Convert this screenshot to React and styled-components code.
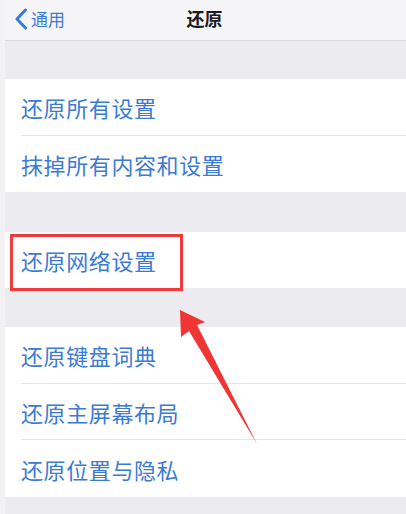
import React from 'react'
import styled, { createGlobalStyle } from 'styled-components'

const Global = createGlobalStyle`
  html, body {
    margin: 0;
    padding: 0;
    background: #ececf0;
  }
  body {
    font-family: "Noto Sans CJK SC", "Noto Sans", sans-serif;
  }
`

const Page = styled.div`
  position: relative;
  width: 406px;
  height: 514px;
  overflow: hidden;
  box-sizing: border-box;
  border-left: 5px solid #f2f2f5;
  background: #ececf0;
`

const NavBar = styled.div`
  height: 40px;
  box-sizing: content-box;
  background: #f5f5f8;
  border-bottom: 1px solid #d9d9de;
  display: grid;
  grid-template-columns: 1fr auto 1fr;
  align-items: center;
  margin-left: -5px;
  padding-left: 5px;
  padding-bottom: 0;
`

const Back = styled.div`
  display: flex;
  align-items: center;
  gap: 3px;
  padding-left: 9px;
  padding-bottom: 3px;
  color: #3b7ad6;
  font-size: 17px;
  line-height: 1;
`

const Title = styled.div`
  font-size: 18px;
  font-weight: 700;
  color: #1b1b1d;
  margin-left: -2px;
  padding-bottom: 4px;
`

const Spacer = styled.div`
  height: ${p => p.h}px;
`

const Group = styled.div`
  background: #ffffff;
  padding-left: 16px;
`

const Row = styled.div`
  height: ${p => p.h || 56}px;
  box-sizing: border-box;
  display: flex;
  align-items: center;
  font-size: 22px;
  color: #3c7bd3;
  letter-spacing: 0.6px;
  border-bottom: ${p => (p.last ? 'none' : '1px solid #e6e6ea')};
`

const Highlight = styled.div`
  position: absolute;
  left: 5px;
  top: 234px;
  width: 173px;
  height: 57px;
  box-sizing: border-box;
  border: 3px solid #ef3b3b;
`

const Overlay = styled.svg`
  position: absolute;
  left: -5px;
  top: 0;
  pointer-events: none;
`

const Chevron = () => (
  <svg width="14" height="22" viewBox="0 0 14 22">
    <path d="M11.5 2 L3 11 L11.5 20" fill="none" stroke="#3b7ad6" strokeWidth="3" strokeLinecap="round" strokeLinejoin="round" />
  </svg>
)

const App = () => (
  <>
    <Global />
    <Page>
      <NavBar>
        <Back>
          <Chevron />
          <span>通用</span>
        </Back>
        <Title>还原</Title>
        <div />
      </NavBar>
      <Spacer h={38} />
      <Group>
        <Row h={57}>还原所有设置</Row>
        <Row h={56} last>抹掉所有内容和设置</Row>
      </Group>
      <Spacer h={40} />
      <Group>
        <Row h={56} last>还原网络设置</Row>
      </Group>
      <Spacer h={39} />
      <Group>
        <Row h={57}>还原键盘词典</Row>
        <Row h={56}>还原主屏幕布局</Row>
        <Row h={57} last>还原位置与隐私</Row>
      </Group>
      <Highlight />
      <Overlay width="406" height="514" viewBox="0 0 406 514">
        <polygon
          points="180,310 181,337 189,331 257,444 197,325 205,322"
          fill="#f03535"
        />
      </Overlay>
    </Page>
  </>
)

export default App
